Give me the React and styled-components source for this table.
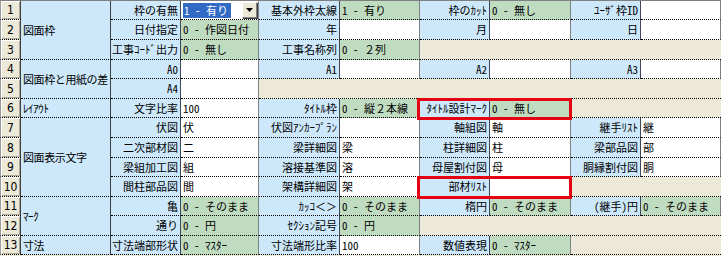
import React from 'react';
import styled, { createGlobalStyle, css } from 'styled-components';

const GlobalStyle = createGlobalStyle`
  html, body { margin: 0; padding: 0; background: #ece9d8; }
  body {
    font-family: "Noto Sans Mono CJK JP", "Noto Sans CJK JP", "Noto Sans", sans-serif;
    font-size: 11px;
    color: #000;
  }
`;

const Sheet = styled.div`
  display: grid;
  grid-template-columns: 21px 90px 70px 78px 81px 80px 70px 81px 70px 1fr;
  grid-template-rows: 19px 20px 20px 19px 20px 19px 20px 20px 19px 20px 19px 20px 19px;
  width: 721px;
  border-top: 1px solid #7f7f7f;
  background: #ece9d8;
`;

const place = css`
  grid-row: ${(p) => p.$row} / span ${(p) => p.$rows || 1};
  grid-column: ${(p) => p.$col} / ${(p) => (p.$toEnd ? '-1' : `span ${p.$span || 1}`)};
`;

const cellBase = css`
  ${place};
  box-sizing: border-box;
  display: flex;
  align-items: center;
  min-width: 0;
  overflow: hidden;
  white-space: pre;
  line-height: 1;
  border-bottom: 1px dotted #000;
`;

const RowHead = styled.div`
  ${cellBase};
  justify-content: center;
  background: #ece9d8;
  border-left: 1px solid #9a9a9a;
  border-right: 1px solid #404040;
  box-shadow: inset 1px 1px 0 #fff, inset -1px -1px 0 #aca899;
  font-family: "Liberation Sans Narrow", "DejaVu Sans Condensed", "Liberation Sans", sans-serif;
  font-size: 12px;
`;

const Section = styled.div`
  ${cellBase};
  background: #cde8fb;
  border-right: 1px solid #404040;
  padding-left: 2px;
  letter-spacing: -0.4px;
`;

const Label = styled.div`
  ${cellBase};
  justify-content: flex-end;
  background: #cde8fb;
  border-right: 1px solid #404858;
  padding-right: 2px;
`;

const tones = { g: '#c0dcc0', w: '#ffffff' };

const Value = styled.div`
  ${cellBase};
  background: ${(p) => tones[p.$tone] || '#fff'};
  border-right: 1px solid #808080;
  padding-left: 2px;
`;

const Combo = styled.div`
  ${cellBase};
  justify-content: space-between;
  background: #fff;
  border-right: 1px solid #808080;
  padding: 0 1px 0 2px;
`;

const Selected = styled.span`
  background: #316ac5;
  color: #fff;
  padding: 2px 3px 2px 1px;
`;

const DropButton = styled.span`
  box-sizing: border-box;
  width: 15px;
  height: 16px;
  display: flex;
  align-items: center;
  justify-content: center;
  background: #ece9d8;
  border: 1px solid;
  border-color: #fff #808080 #808080 #fff;
  box-shadow: 1px 1px 0 #404040;
`;

const Empty = styled.div`
  ${cellBase};
  background: #ece9d8;
`;

const Highlight = styled.div`
  ${place};
  box-sizing: border-box;
  margin: -1px -1px -2px -3px;
  border: 3px solid #e50012;
  z-index: 2;
  pointer-events: none;
`;

const sections = [
  { label: '図面枠', start: 1, span: 3 },
  { label: '図面枠と用紙の差', start: 4, span: 2 },
  { label: 'ﾚｲｱｳﾄ', start: 6, span: 1 },
  { label: '図面表示文字', start: 7, span: 4 },
  { label: 'ﾏｰｸ', start: 11, span: 2 },
  { label: '寸法', start: 13, span: 1 },
];

const rows = [
  [['枠の有無', '1 - 有り', 'combo'], ['基本外枠太線', '1 - 有り', 'g'], ['枠のｶｯﾄ', '0 - 無し', 'g'], ['ﾕｰｻﾞ枠ID', '', 'w']],
  [['日付指定', '0 - 作図日付', 'g'], ['年', '', 'w'], ['月', '', 'w'], ['日', '', 'w']],
  [['工事ｺｰﾄﾞ出力', '0 - 無し', 'g'], ['工事名称列', '0 - ２列', 'g']],
  [['A0', '', 'w'], ['A1', '', 'w'], ['A2', '', 'w'], ['A3', '', 'w']],
  [['A4', '', 'w']],
  [['文字比率', '100', 'w'], ['ﾀｲﾄﾙ枠', '0 - 縦２本線', 'g'], ['ﾀｲﾄﾙ設計ﾏｰｸ', '0 - 無し', 'g']],
  [['伏図', '伏', 'w'], ['伏図ｱﾝｶｰﾌﾟﾗﾝ', '', 'w'], ['軸組図', '軸', 'w'], ['継手ﾘｽﾄ', '継', 'w']],
  [['二次部材図', '二', 'w'], ['梁詳細図', '梁', 'w'], ['柱詳細図', '柱', 'w'], ['梁部品図', '部', 'w']],
  [['梁組加工図', '組', 'w'], ['溶接基準図', '溶', 'w'], ['母屋割付図', '母', 'w'], ['胴縁割付図', '胴', 'w']],
  [['間柱部品図', '間', 'w'], ['架構詳細図', '架', 'w'], ['部材ﾘｽﾄ', '', 'w']],
  [['亀', '0 - そのまま', 'g'], ['ｶｯｺ＜＞', '0 - そのまま', 'g'], ['楕円', '0 - そのまま', 'g'], ['(継手)円', '0 - そのまま', 'g']],
  [['通り', '0 - 円', 'g'], ['ｾｸｼｮﾝ記号', '0 - 円', 'g']],
  [['寸法端部形状', '0 - ﾏｽﾀｰ', 'g'], ['寸法端形比率', '100', 'w'], ['数値表現', '0 - ﾏｽﾀｰ', 'g']],
];

const highlights = [
  { row: 6, col: 7, span: 2 },
  { row: 10, col: 7, span: 2 },
];

function DownArrow() {
  return (
    <svg width="7" height="4" viewBox="0 0 7 4">
      <path d="M0 0H7L3.5 4Z" fill="#000" />
    </svg>
  );
}

export default function App() {
  const cells = [];
  rows.forEach((pairs, i) => {
    const r = i + 1;
    cells.push(<RowHead key={`h${r}`} $row={r} $col={1}>{r}</RowHead>);
    pairs.forEach(([label, value, kind], j) => {
      const col = 3 + j * 2;
      cells.push(<Label key={`l${r}-${j}`} $row={r} $col={col}>{label}</Label>);
      if (kind === 'combo') {
        cells.push(
          <Combo key={`v${r}-${j}`} $row={r} $col={col + 1}>
            <Selected>{value}</Selected>
            <DropButton><DownArrow /></DropButton>
          </Combo>
        );
      } else {
        cells.push(<Value key={`v${r}-${j}`} $row={r} $col={col + 1} $tone={kind}>{value}</Value>);
      }
    });
    if (pairs.length < 4) {
      cells.push(<Empty key={`e${r}`} $row={r} $col={3 + pairs.length * 2} $toEnd />);
    }
  });

  return (
    <>
      <GlobalStyle />
      <Sheet>
        {sections.map((s) => (
          <Section key={s.label} $row={s.start} $rows={s.span} $col={2}>{s.label}</Section>
        ))}
        {cells}
        {highlights.map((h) => (
          <Highlight key={`hl${h.row}`} $row={h.row} $col={h.col} $span={h.span} />
        ))}
      </Sheet>
    </>
  );
}
